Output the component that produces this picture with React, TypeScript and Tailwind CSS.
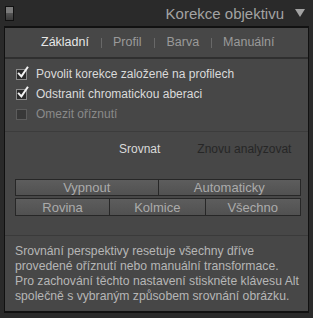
import React from "react";

const Check = ({ checked, disabled }: { checked?: boolean; disabled?: boolean }) => (
  <div className="relative w-[11px] h-[11px] shrink-0">
    <div
      className={
        disabled
          ? "absolute inset-0 border border-[#5c5c5c] bg-[#383838]"
          : "absolute inset-0 border border-[#8c8c8c] bg-[#2a2a2a]"
      }
    />
    {checked && (
      <svg className="absolute left-[1px] top-[-3px]" width="12" height="13" viewBox="0 0 12 13">
        <path d="M1.8 7.6 L4.4 10.4 L10.4 1.6" stroke="#f2f2f2" strokeWidth="2" fill="none" strokeLinecap="square" />
      </svg>
    )}
  </div>
);

const Btn = ({ children, className }: { children: React.ReactNode; className?: string }) => (
  <div
    className={
      "flex items-center justify-center border border-[#272727] bg-gradient-to-b from-[#5d5d5d] to-[#515151] text-[#ababab] text-[13px] leading-none " +
      (className || "")
    }
  >
    {children}
  </div>
);

export default function App() {
  return (
    <div
      className="w-[313px] h-[318px] bg-[#2a2a2a] overflow-hidden flex flex-col"
      style={{ fontFamily: '"Liberation Sans", Arial, sans-serif' }}
    >
      <div className="h-[26px] flex items-center pl-[5px] pr-[8px] shrink-0">
        <div className="w-[9px] h-[15px] border border-[#111] flex flex-col">
          <div className="h-[6px] bg-[#7a7a7a]" />
          <div className="flex-1 bg-gradient-to-b from-[#555] to-[#3a3a3a]" />
        </div>
        <div className="flex-1" />
        <span className="text-[15px] text-[#a3a3a3] mr-[11px] leading-none">Korekce objektivu</span>
        <svg width="10" height="8" viewBox="0 0 10 8">
          <polygon points="0,0 10,0 5,8" fill="#a3a3a3" />
        </svg>
      </div>
      <div className="ml-[4px] w-[305px] h-[287px] shrink-0 border-t-2 border-x border-b-2 border-[#111] bg-[#474747] flex flex-col">
        <div className="h-[31px] shrink-0 flex items-center pl-[36px] text-[12.5px] leading-none border-b-2 border-[#2f2f2f]">
          <span className="text-[#e6e6e6]">Základní</span>
          <span className="ml-[12px] mr-[11px] w-px h-[10px] bg-[#686868]" />
          <span className="text-[#9a9a9a]">Profil</span>
          <span className="ml-[13px] mr-[11px] w-px h-[10px] bg-[#686868]" />
          <span className="text-[#9a9a9a]">Barva</span>
          <span className="ml-[12px] mr-[11px] w-px h-[10px] bg-[#686868]" />
          <span className="text-[#9a9a9a]">Manuální</span>
        </div>
        <div className="shrink-0 flex flex-col gap-[9px] pt-[10px] pl-[11px] pb-[11px] text-[12px] leading-[11px]">
          <div className="flex items-center h-[11px] gap-[9px] text-[#dadada]">
            <Check checked />
            <span>Povolit korekce založené na profilech</span>
          </div>
          <div className="flex items-center h-[11px] gap-[9px] text-[#dadada]">
            <Check checked />
            <span>Odstranit chromatickou aberaci</span>
          </div>
          <div className="flex items-center h-[11px] gap-[9px] text-[#8a8a8a]">
            <Check disabled />
            <span>Omezit oříznutí</span>
          </div>
        </div>
        <div className="shrink-0 border-t border-[#3c3c3c] flex flex-col pl-[10px] pr-[7px]">
          <div className="h-[34px] flex items-center text-[12px] leading-none">
            <span className="ml-[104px] text-[#dadada]">Srovnat</span>
            <span className="ml-[37px] text-[#262626]">Znovu analyzovat</span>
          </div>
          <div className="mt-[13px] flex flex-col gap-[2px]">
            <div className="flex h-[17px]">
              <Btn className="flex-1">Vypnout</Btn>
              <Btn className="flex-1 -ml-px">Automaticky</Btn>
            </div>
            <div className="flex h-[18px]">
              <Btn className="w-[95px]">Rovina</Btn>
              <Btn className="flex-1 -ml-px">Kolmice</Btn>
              <Btn className="flex-1 -ml-px">Všechno</Btn>
            </div>
          </div>
        </div>
        <div className="mt-[19px] flex-1 border-t border-[#3a3a3a] pt-[8px] pl-[10px] text-[12.2px] leading-[15px] text-[#b6b6b6] whitespace-nowrap">
          Srovnání perspektivy resetuje všechny dříve
          <br />
          provedené oříznutí nebo manuální transformace.
          <br />
          Pro zachování těchto nastavení stiskněte klávesu Alt
          <br />
          společně s vybraným způsobem srovnání obrázku.
        </div>
      </div>
    </div>
  );
}
